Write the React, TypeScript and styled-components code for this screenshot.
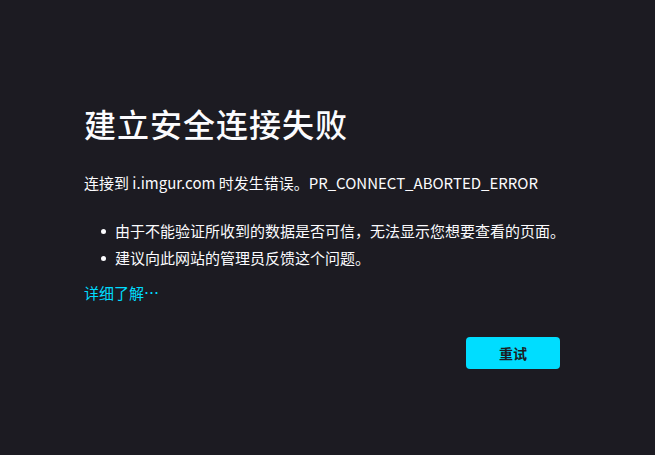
import React from "react";
import styled, { createGlobalStyle } from "styled-components";

const Global = createGlobalStyle`
  html, body { margin: 0; padding: 0; background: #1c1b22; }
  body {
    width: 655px; height: 455px; overflow: hidden;
    font-family: "Noto Sans CJK SC", "Noto Sans", sans-serif;
    color: #fbfbfe;
  }
`;

const Page = styled.div`
  padding: 103px 0 0 84px;
`;

const Container = styled.div`
  width: 476px;
  display: flex;
  flex-direction: column;
`;

const Title = styled.h1`
  margin: 0;
  font-size: 32px;
  line-height: 40px;
  font-weight: 500;
  letter-spacing: 1px;
  color: #fbfbfe;
`;

const Desc = styled.p`
  margin: 28px 0 0;
  font-size: 15px;
  line-height: 24px;
  white-space: nowrap;
`;

const List = styled.ul`
  margin: 24px 0 0;
  padding: 0;
  list-style: none;
  display: flex;
  flex-direction: column;
  gap: 3px;
`;

const Item = styled.li`
  display: flex;
  align-items: center;
  font-size: 15px;
  line-height: 24px;
  padding-left: 17px;
  white-space: nowrap;
  &::before {
    content: "";
    width: 5px;
    height: 5px;
    border-radius: 50%;
    background: #fbfbfe;
    margin-right: 9px;
    flex: none;
  }
`;

const Link = styled.a`
  margin-top: 11px;
  font-size: 15px;
  line-height: 24px;
  color: #00ddff;
  text-decoration: none;
  align-self: flex-start;
`;

const Actions = styled.div`
  display: flex;
  justify-content: flex-end;
  margin-top: 32px;
`;

const Button = styled.button`
  width: 94px;
  height: 32px;
  border: none;
  border-radius: 4px;
  background: #00ddff;
  color: #1c1b22;
  font-family: inherit;
  font-size: 14px;
  font-weight: 700;
  cursor: pointer;
`;

export default function App() {
  return (
    <>
      <Global />
      <Page>
        <Container>
          <Title>建立安全连接失败</Title>
          <Desc>连接到 i.imgur.com 时发生错误。PR_CONNECT_ABORTED_ERROR</Desc>
          <List>
            <Item>由于不能验证所收到的数据是否可信，无法显示您想要查看的页面。</Item>
            <Item>建议向此网站的管理员反馈这个问题。</Item>
          </List>
          <Link href="#">详细了解…</Link>
          <Actions>
            <Button>重试</Button>
          </Actions>
        </Container>
      </Page>
    </>
  );
}
